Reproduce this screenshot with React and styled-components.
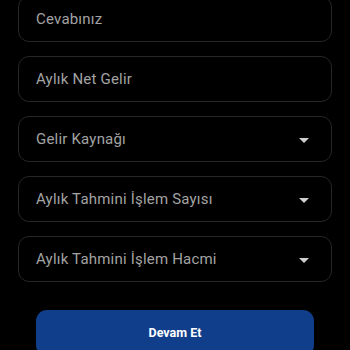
import React from "react";
import styled, { createGlobalStyle } from "styled-components";

const Global = createGlobalStyle`
  html, body {
    margin: 0;
    background: #000;
  }
  body {
    font-family: Roboto, "Noto Sans", sans-serif;
  }
`;

const Page = styled.div`
  width: 350px;
  height: 350px;
  overflow: hidden;
  background: #000;
`;

const Form = styled.div`
  display: flex;
  flex-direction: column;
  gap: 14px;
  padding: 0 18px;
  margin-top: -4px;
`;

const Field = styled.div`
  box-sizing: border-box;
  height: 46px;
  border: 1px solid #262626;
  border-radius: 11px;
  display: flex;
  align-items: center;
  justify-content: space-between;
  padding: 0 22px 0 17px;
  color: #a3a3a3;
  font-size: 15px;
  letter-spacing: 0.2px;
`;

const Caret = styled.span`
  width: 0;
  height: 0;
  border-left: 5px solid transparent;
  border-right: 5px solid transparent;
  border-top: 5px solid #d0d0d0;
  margin-top: 2px;
`;

const Button = styled.button`
  display: block;
  box-sizing: border-box;
  width: 278px;
  height: 46px;
  margin: 28px 0 0 36px;
  border: none;
  border-radius: 11px;
  background: #113e8b;
  color: #fff;
  font-family: Roboto, sans-serif;
  font-weight: 700;
  font-size: 12.5px;
  padding: 0 0 2px;
`;

const fields = [
  { label: "Cevabınız" },
  { label: "Aylık Net Gelir" },
  { label: "Gelir Kaynağı", select: true },
  { label: "Aylık Tahmini İşlem Sayısı", select: true },
  { label: "Aylık Tahmini İşlem Hacmi", select: true },
];

export default function App() {
  return (
    <Page>
      <Global />
      <Form>
        {fields.map((f) => (
          <Field key={f.label}>
            <span>{f.label}</span>
            {f.select && <Caret />}
          </Field>
        ))}
      </Form>
      <Button>Devam Et</Button>
    </Page>
  );
}
